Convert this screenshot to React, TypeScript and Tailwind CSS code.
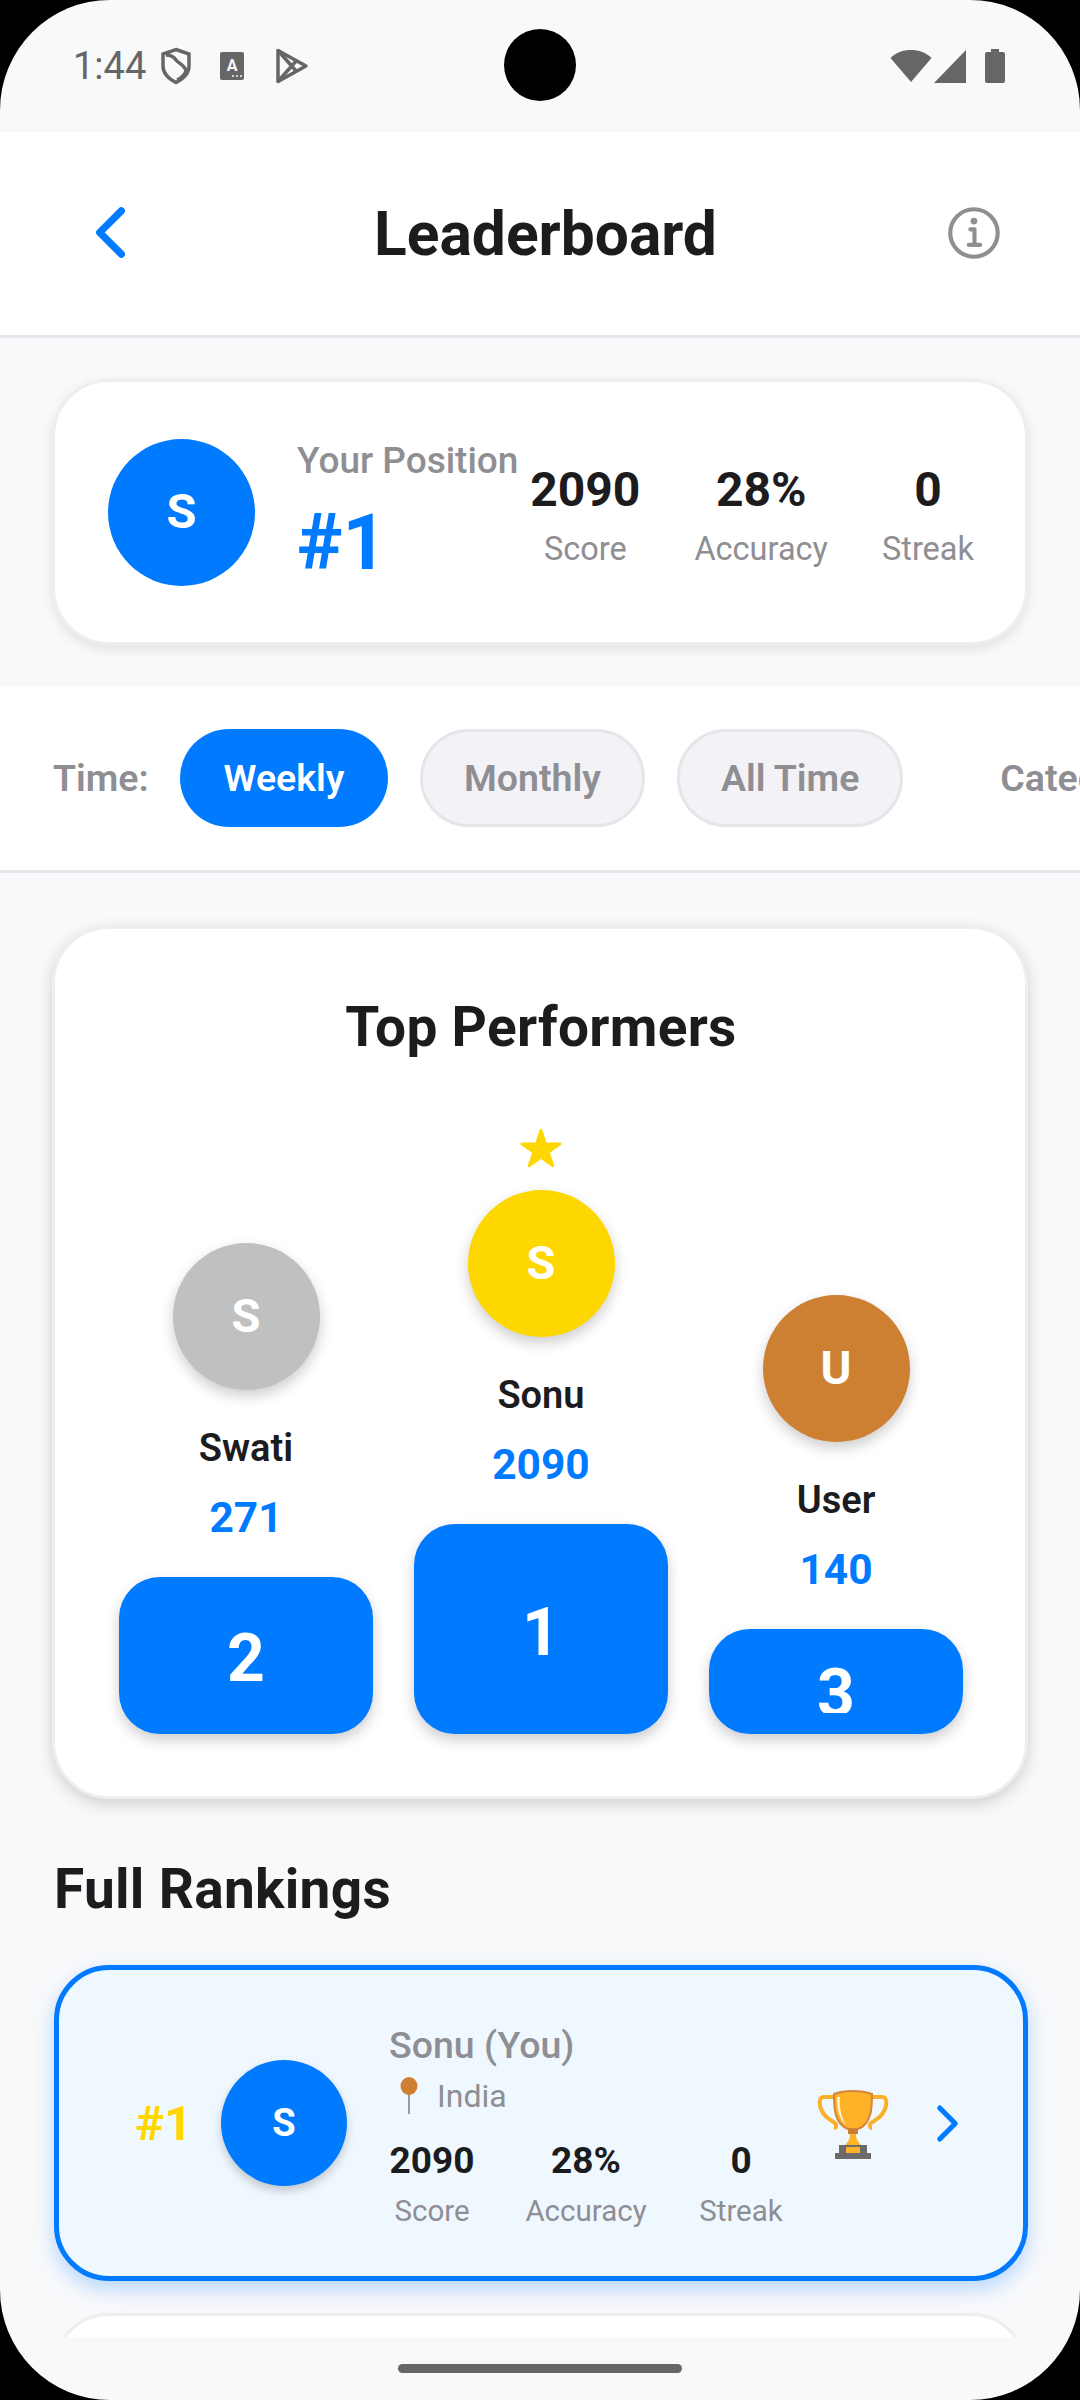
import { IoChevronBack, IoChevronForward, IoInformationCircleOutline, IoStar } from "react-icons/io5";

const font = { fontFamily: '"Roboto", "Liberation Sans", sans-serif' };

function StatusBar() {
    return (
        <div className="relative h-[132px] shrink-0 flex items-center justify-between pl-[73px] pr-[75px] text-[#666666]">
            <div className="flex items-center">
                <span className="text-[38px] leading-none w-[89px]">1:44</span>
                <svg width="32" height="38" viewBox="0 0 32 38" fill="none" stroke="#666666" strokeWidth="3.5" className="-ml-[2px]">
                    <path d="M16 2.5 29 7v12c0 8-6 13-13 16.500C9 32 3 27 3 19V7z" />
                    <path d="M6 8c4 0 8 2 10 5 3 4 9 5 10 11-1 4-6 8-9 9" />
                </svg>
                <svg width="24" height="28" viewBox="0 0 24 28" className="ml-[28px]">
                    <rect width="24" height="28" rx="2" fill="#666666" />
                    <text x="12" y="19" textAnchor="middle" fontSize="16" fontWeight="700" fill="#f8f9fb">A</text>
                    <circle cx="13" cy="24" r="1" fill="#f8f9fb" />
                    <circle cx="17" cy="24" r="1" fill="#f8f9fb" />
                    <circle cx="21" cy="24" r="1" fill="#f8f9fb" />
                </svg>
                <svg width="34" height="38" viewBox="0 0 34 38" fill="none" stroke="#666666" strokeWidth="3.5" strokeLinejoin="round" className="ml-[31px]">
                    <path d="M3 3.500v31L31 19z" />
                    <path d="M3 3.500 22 25M3 34.500 22 13" />
                </svg>
            </div>
            <div className="absolute left-[504px] top-[29px] w-[72px] h-[72px] rounded-full bg-black" />
            <div className="flex items-center">
                <svg width="42" height="34" viewBox="0 0 42 34" fill="#666666"><path d="M21 33 .5 9C6 3.500 13 1 21 1s15 2.500 20.500 8z" /></svg>
                <svg width="32" height="33" viewBox="0 0 32 33" fill="#666666" className="ml-[2px]"><path d="M32 0v33H0z" /></svg>
                <svg width="20" height="34" viewBox="0 0 20 34" fill="#666666" className="ml-[19px]"><path d="M6 0h8v3h4a2 2 0 0 1 2 2v27a2 2 0 0 1-2 2H2a2 2 0 0 1-2-2V5a2 2 0 0 1 2-2h4z" /></svg>
            </div>
        </div>
    );
}

function Stat({ value, label }: { value: string; label: string }) {
    return (
        <div className="flex flex-col items-center">
            <span className="text-[48px] leading-[58px] font-bold text-[#1c1c1e]">{value}</span>
            <span className="mt-[10px] text-[32.500px] leading-[40px] text-[#8e8e93]">{label}</span>
        </div>
    );
}

function Pill({ label, active }: { label: string; active?: boolean }) {
    return (
        <div className={active
            ? "h-[98px] w-[208px] rounded-[49px] bg-[#007aff] text-white flex items-center justify-center text-[37.500px] font-semibold shrink-0 pt-[2px]"
            : "h-[98px] rounded-[49px] bg-[#f2f2f7] border-[3px] border-[#e5e5ea] text-[#8e8e93] flex items-center justify-center text-[37.500px] font-semibold shrink-0 px-[41px] pt-[2px]"}>
            {label}
        </div>
    );
}

function Podium({ name, score, rank, color, height, star, clip }: { name: string; score: string; rank: string; color: string; height: string; star?: boolean; clip?: boolean }) {
    return (
        <div className="w-[254px] flex flex-col items-center">
            {star && <IoStar size={44} color="#ffd700" className="mb-[20px]" />}
            <div className={"w-[147px] h-[147px] rounded-full flex items-center justify-center text-white text-[47px] font-bold shadow-[0_6px_14px_rgba(0,0,0,0.2)] " + color}>
                {name[0]}
            </div>
            <div className="mt-[38px] text-[38px] leading-[40px] font-semibold text-[#1c1c1e]">{name}</div>
            <div className="mt-[28px] text-[42.500px] leading-[44px] font-bold text-[#007aff]">{score}</div>
            <div className={"mt-[37px] w-full rounded-[41px] bg-[#007aff] shadow-[0_6px_14px_rgba(0,0,0,0.2)] text-white text-[66px] font-bold flex justify-center overflow-hidden " + height + (clip ? "" : " items-center pt-[6px]")}>
                {clip
                    ? <div className="mt-[21px] h-[63px] overflow-hidden leading-[88px]">{rank}</div>
                    : rank}
            </div>
        </div>
    );
}

function Pin() {
    return (
        <svg width="20" height="37" viewBox="0 0 20 37">
            <path d="M10 16v21" stroke="#9a9a9e" strokeWidth="2" />
            <ellipse cx="10" cy="9" rx="8.500" ry="9" fill="#cd7f32" />
        </svg>
    );
}

function Trophy() {
    return (
        <svg width="72" height="70" viewBox="0 0 72 70" fill="none" className="mt-[2px]">
            <path d="M19 8H7c-4 0-5 4-4 9 2 9 9 13 15 17 2 2 1 5-1 5M53 8h12c4 0 5 4 4 9-2 9-9 13-15 17-2 2-1 5 1 5" stroke="#fbb02a" strokeWidth="4" />
            <path d="M17 5c10-4 28-4 38 0 0 12 0 30-14 35H31C17 35 17 17 17 5z" fill="#fdb228" stroke="#d5863a" strokeWidth="2" />
            <path d="M23 8c-1 10 1 20 6 28-7-5-9-18-9-28z" fill="#fff3d6" />
            <rect x="31" y="40" width="10" height="5" fill="#c77f35" />
            <path d="M33 45h6c0 5 2 8 5 11H28c3-3 5-6 5-11z" fill="#fdb228" />
            <rect x="22" y="56" width="28" height="9" fill="#6b6b6b" />
            <rect x="18" y="64" width="36" height="6" fill="#6b6b6b" />
            <rect x="29" y="58" width="14" height="6" fill="#fdb228" />
        </svg>
    );
}

function RowStat({ value, label, center }: { value: string; label: string; center: string }) {
    return (
        <div className={"flex flex-col items-center " + center}>
            <span className="text-[37px] leading-[44px] font-bold text-[#1c1c1e]">{value}</span>
            <span className="mt-[10px] text-[29.500px] leading-[36px] text-[#8e8e93] whitespace-nowrap">{label}</span>
        </div>
    );
}

export default function App() {
    return (
        <div className="w-[1080px] h-[2400px] bg-black" style={font}>
            <div className="w-full h-full rounded-[110px] bg-[#f8f9fb] overflow-hidden flex flex-col">
                <StatusBar />

                <header className="h-[206px] shrink-0 bg-white border-b-[3px] border-[#e5e5ea] flex items-center justify-between pl-[72px] pr-[72px]">
                    <IoChevronBack size={77} color="#007aff" className="-mt-[2px]" />
                    <h1 className="text-[60.500px] font-bold text-[#1c1c1e] pt-[3px]">Leaderboard</h1>
                    <IoInformationCircleOutline size={66} color="#8e8e93" />
                </header>

                <div className="flex-1 min-h-0 overflow-hidden">
                    <section className="px-[52px] pt-[41px] pb-[42px]">
                        <div className="h-[266px] bg-white rounded-[57px] border-[3px] border-[#eeeef1] shadow-[0_4px_12px_rgba(0,0,0,0.1)] flex items-center pl-[53px] pr-[51px]">
                            <div className="w-[147px] h-[147px] rounded-full bg-[#007aff] text-white flex items-center justify-center text-[49px] font-bold shrink-0">S</div>
                            <div className="ml-[42px] w-[226px] shrink-0 whitespace-nowrap mt-[3px]">
                                <div className="text-[37px] leading-[44px] font-medium text-[#8e8e93]">Your Position</div>
                                <div className="mt-[15px] text-[77px] leading-[90px] font-bold text-[#007aff]">#1</div>
                            </div>
                            <div className="flex-1 flex justify-end gap-[54px] items-start pt-[5px]">
                                <Stat value="2090" label="Score" />
                                <Stat value="28%" label="Accuracy" />
                                <Stat value="0" label="Streak" />
                            </div>
                        </div>
                    </section>

                    <section className="h-[186px] bg-white border-b-[3px] border-[#e5e5ea] flex items-center pl-[53px] pb-[2px] gap-[32px] overflow-hidden">
                        <span className="text-[37.500px] font-semibold text-[#8e8e93] w-[95px] shrink-0 pt-[2px]">Time:</span>
                        <Pill label="Weekly" active />
                        <Pill label="Monthly" />
                        <Pill label="All Time" />
                        <span className="ml-[65px] text-[37.500px] font-semibold text-[#8e8e93] whitespace-nowrap pt-[2px]">Category:</span>
                    </section>

                    <div className="px-[52px] pt-[53px]">
                        <div className="h-[873px] bg-white rounded-[57px] border-[3px] border-[#eeeef1] shadow-[0_5px_16px_rgba(0,0,0,0.17)] pl-[64px] pr-[62px]">
                            <h2 className="pt-[68px] text-center text-[55px] leading-[60px] font-bold tracking-[0.3px] text-[#1c1c1e]">Top Performers</h2>
                            <div className="h-[677px] flex items-end justify-between">
                                <Podium name="Swati" score="271" rank="2" color="bg-[#c0c0c0]" height="h-[157px]" />
                                <Podium name="Sonu" score="2090" rank="1" color="bg-[#ffd700]" height="h-[210px]" star />
                                <Podium name="User" score="140" rank="3" color="bg-[#cd7f32]" height="h-[105px]" clip />
                            </div>
                        </div>

                        <h2 className="mt-[60px] ml-[2px] text-[55px] leading-[60px] font-bold tracking-[0.3px] text-[#1c1c1e]">Full Rankings</h2>

                        <div className="mt-[46px] ml-[2px] h-[316px] bg-[#f0f8ff] rounded-[55px] border-[5px] border-[#007aff] shadow-[0_8px_20px_rgba(0,122,255,0.27)] flex items-center pl-[76px] pr-[48px]">
                            <span className="text-[49px] font-bold text-[#ffd700] w-[86px] shrink-0 pt-[2px]">#1</span>
                            <div className="w-[126px] h-[126px] rounded-full bg-[#007aff] text-white flex items-center justify-center text-[38px] font-bold shrink-0 shadow-[0_5px_10px_rgba(0,0,0,0.2)]">S</div>
                            <div className="ml-[42px] flex-1">
                                <div className="text-[37.500px] leading-[44px] font-medium text-[#8e8e93]">Sonu (You)</div>
                                <div className="mt-[8px] flex items-center pl-[10px] text-[32px] leading-[42px] text-[#8e8e93]">
                                    <Pin />
                                    <span className="ml-[18px]">India</span>
                                </div>
                                <div className="mt-[22px] flex h-[85px] items-start pl-[2px]">
                                    <RowStat value="2090" label="Score" center="w-[82px]" />
                                    <RowStat value="28%" label="Accuracy" center="w-[118px] ml-[54px]" />
                                    <RowStat value="0" label="Streak" center="w-[84px] ml-[54px]" />
                                </div>
                            </div>
                            <Trophy />
                            <IoChevronForward size={55} color="#007aff" className="ml-[31px]" />
                        </div>

                        <div className="mt-[32px] h-[200px] bg-white rounded-[57px] border-[3px] border-[#eeeef1]" />
                    </div>
                </div>

                <div className="h-[63px] shrink-0 flex justify-center pt-[27px]">
                    <div className="w-[284px] h-[9px] rounded-full bg-[#666666]" />
                </div>
            </div>
        </div>
    );
}
